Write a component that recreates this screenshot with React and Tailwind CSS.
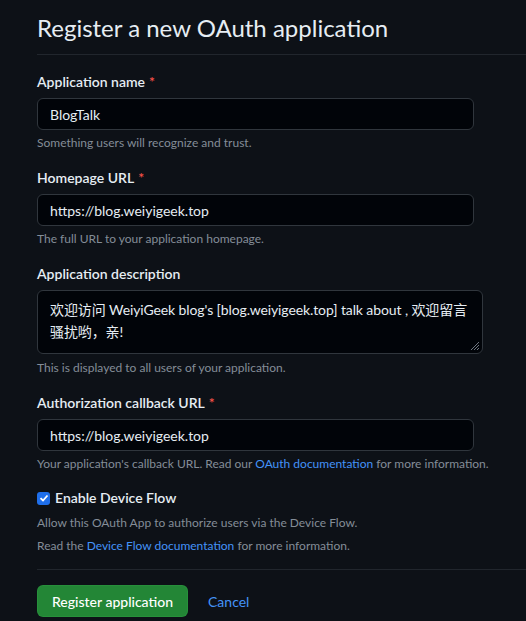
const FONT = "font-['Lato','Noto_Sans_CJK_SC',sans-serif]";

function Field({ label, required, children, note, noteGap = 'mt-[3px]' }) {
  return (
    <div className="flex flex-col">
      <label className="text-[14px] font-semibold leading-[20px] text-[#e6edf3]">
        {label}
        {required ? <span className="ml-1 text-[#f85149]">*</span> : null}
      </label>
      <div className="mt-[6px]">{children}</div>
      <p className={`${noteGap} text-[12px] leading-[20px] text-[#848d97]`}>{note}</p>
    </div>
  );
}

function TextInput({ value }) {
  return (
    <div className="flex h-8 w-[437px] items-center rounded-md border border-[#30363d] bg-[#010409] px-3 text-[14px] text-[#e6edf3]">
      {value}
    </div>
  );
}

export default function App() {
  return (
    <div className={`min-h-screen bg-[#0d1117] pl-[37px] ${FONT}`}>
      <div className="border-b border-[#21262d] pb-[10px] pt-[12px]">
        <h1 className="text-[24px] font-normal leading-[32px] text-[#e6edf3]">
          Register a new OAuth application
        </h1>
      </div>

      <div className="flex flex-col gap-[15px] pt-[17px]">
        <Field label="Application name" required note="Something users will recognize and trust.">
          <TextInput value="BlogTalk" />
        </Field>

        <Field label="Homepage URL" required note="The full URL to your application homepage.">
          <TextInput value="https://blog.weiyigeek.top" />
        </Field>

        <Field
          label="Application description"
          noteGap="mt-[4px]"
          note="This is displayed to all users of your application."
        >
          <div className="relative h-[64px] w-[446px] rounded-md border border-[#30363d] bg-[#010409] py-[8px] pl-3 pr-2 text-[14px] leading-[22px] tracking-[-0.1px] text-[#e6edf3]">
            欢迎访问 WeiyiGeek blog's [blog.weiyigeek.top] talk about , 欢迎留言骚扰哟，亲!
            <svg className="absolute bottom-[2px] right-[2px]" width="12" height="12" viewBox="0 0 12 12">
              <path d="M11 3 3 11M11 6 6 11M11 9 9 11" stroke="#6e7681" strokeWidth="1" />
            </svg>
          </div>
        </Field>

        <Field
          label="Authorization callback URL"
          required
          note={
            <>
              Your application's callback URL. Read our{' '}
              <a className="text-[#4493f8]">OAuth documentation</a> for more information.
            </>
          }
        >
          <TextInput value="https://blog.weiyigeek.top" />
        </Field>
      </div>

      <div className="mt-[14px] border-b border-[#21262d] pb-[13px]">
        <div className="flex items-center gap-[5px]">
          <span className="flex h-[13px] w-[13px] items-center justify-center rounded-[3px] bg-[#1f6feb]">
            <svg width="10" height="10" viewBox="0 0 10 10">
              <path d="M1.5 5.2 4 7.5 8.5 2.5" stroke="#fff" strokeWidth="1.8" fill="none" />
            </svg>
          </span>
          <span className="text-[14px] font-semibold leading-[20px] text-[#e6edf3]">
            Enable Device Flow
          </span>
        </div>
        <p className="mt-[5px] text-[12px] leading-[20px] text-[#848d97]">
          Allow this OAuth App to authorize users via the Device Flow.
        </p>
        <p className="mt-[3px] text-[12px] leading-[20px] text-[#848d97]">
          Read the <a className="text-[#4493f8]">Device Flow documentation</a> for more information.
        </p>
      </div>

      <div className="flex items-center gap-[20px] pt-[15px]">
        <button className="h-8 rounded-md border border-[#2ea043]/40 bg-[#238636] px-[14px] text-[14px] font-medium text-white">
          Register application
        </button>
        <a className="text-[14px] text-[#4493f8]">Cancel</a>
      </div>
    </div>
  );
}
